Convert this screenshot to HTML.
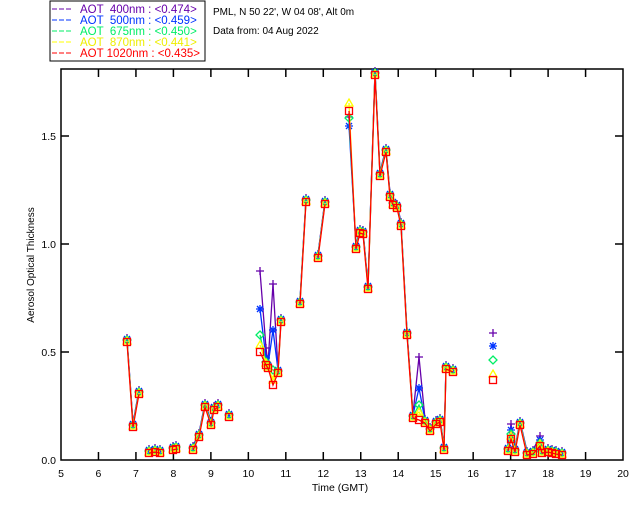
<!DOCTYPE html>
<html><head><meta charset="utf-8"><style>
html,body{margin:0;padding:0;background:#fff;width:640px;height:512px;overflow:hidden}
svg{display:block;font-family:"Liberation Sans",sans-serif}
text{white-space:pre}
</style></head><body>
<svg id="s" width="640" height="512" xmlns="http://www.w3.org/2000/svg">
<rect x="50" y="1" width="155" height="60" fill="#fff" stroke="#000" stroke-width="1"/>
<g font-size="11.5">
<line x1="52" y1="9" x2="72" y2="9" stroke="#6600aa" stroke-dasharray="5,2"/><text x="80" y="13" fill="#6600aa" xml:space="preserve">AOT  400nm : &lt;0.474&gt;</text>
<line x1="52" y1="20" x2="72" y2="20" stroke="#0033ff" stroke-dasharray="5,2"/><text x="80" y="24" fill="#0033ff" xml:space="preserve">AOT  500nm : &lt;0.459&gt;</text>
<line x1="52" y1="31" x2="72" y2="31" stroke="#00ee66" stroke-dasharray="5,2"/><text x="80" y="35" fill="#00ee66" xml:space="preserve">AOT  675nm : &lt;0.450&gt;</text>
<line x1="52" y1="42" x2="72" y2="42" stroke="#ffff00" stroke-dasharray="5,2"/><text x="80" y="46" fill="#eeee00" xml:space="preserve">AOT  870nm : &lt;0.441&gt;</text>
<line x1="52" y1="53" x2="72" y2="53" stroke="#ff0000" stroke-dasharray="5,2"/><text x="80" y="57" fill="#ff0000" xml:space="preserve">AOT 1020nm : &lt;0.435&gt;</text>
</g>
<text x="213" y="15" fill="#000" font-size="10">PML, N 50 22', W 04 08', Alt 0m</text>
<text x="213" y="34" fill="#000" font-size="10">Data from: 04 Aug 2022</text>
<g id="ax" stroke="#000" stroke-width="1.5" fill="none"><rect x="61" y="69" width="562" height="391"/></g>
<g id="lbl" font-size="10.5" fill="#000"></g>
<text x="340" y="491" font-size="10.5" text-anchor="middle">Time (GMT)</text>
<text transform="translate(34,265) rotate(-90)" font-size="10" text-anchor="middle">Aerosol Optical Thickness</text>
<g id="data"></g>
</svg>
<script>
var NS="http://www.w3.org/2000/svg";
function el(p,t,a){var e=document.createElementNS(NS,t);for(var k in a)e.setAttribute(k,a[k]);p.appendChild(e);return e;}
var ax=document.getElementById('ax'),lb=document.getElementById('lbl');
for(var h=5;h<=20;h++){var x=61+(h-5)*37.47;
 if(h>5&&h<20){el(ax,'line',{x1:x,y1:460,x2:x,y2:452});el(ax,'line',{x1:x,y1:69,x2:x,y2:77});}
 var t=el(lb,'text',{x:x,y:477,'text-anchor':'middle'});t.textContent=h;}
[0,0.5,1,1.5].forEach(function(v){var y=460-216*v;
 if(v>0){el(ax,'line',{x1:61,y1:y,x2:69,y2:y});el(ax,'line',{x1:623,y1:y,x2:615,y2:y});}
 var t=el(lb,'text',{x:56,y:y+4,'text-anchor':'end'});t.textContent=v.toFixed(1);});
var segs=[
[[127,342],[133,427],[139,394]],
[[149,453],[155,452],[160,453]],
[[173,450],[176,449]],
[[193,450],[199,437],[205,407],[211,425],[214,410],[218,407]],
[[229,417]],
[[260,352],[266,365],[268,368],[273,385],[278,373],[281,322]],
[[300,304],[306,202]],
[[318,258],[325,204]],
[[349,111],[356,249],[360,233],[363,234],[368,289],[375,75],[380,176],[386,152],[390,197],[393,205],[397,208],[401,226],[407,335],[413,418],[419,420],[425,423],[430,431],[436,424],[440,422],[444,450],[446,369],[453,372]],
[[493,380]],
[[508,451],[511,439],[515,452],[520,425],[527,455],[533,454],[540,446],[542,453],[548,452],[552,453],[556,454],[562,455]]];
var ser=[{c:'#6600aa',o:4,m:'plus'},{c:'#0033ff',o:3,m:'star'},{c:'#00ee66',o:2,m:'dia'},{c:'#ffff00',o:1,m:'tri'},{c:'#ff0000',o:0,m:'sq'}];
var ov={493:[333,346,360,374],260:[271,309,335,345],273:[284,330,370,380],419:[357,388,405,412],266:[348,358,362,363],349:[117,126,118,103],511:[424,430,434,436],540:[436,440,443,444]};
var g=document.getElementById('data');
ser.forEach(function(s,i){segs.forEach(function(sg){
 var pts=sg.map(function(p){return [p[0],(ov[p[0]]&&i<4)?ov[p[0]][i]:p[1]-s.o];});
 if(pts.length>1)el(g,'polyline',{points:pts.map(function(p){return p.join(',')}).join(' '),fill:'none',stroke:s.c,'stroke-width':1.3});
 pts.forEach(function(p){var x=p[0],y=p[1],a={fill:'none',stroke:s.c,'stroke-width':1.3};
  if(s.m=='plus'){el(g,'path',Object.assign({d:'M'+(x-4)+' '+y+'h8M'+x+' '+(y-4)+'v8'},a));}
  else if(s.m=='star'){el(g,'path',Object.assign({d:'M'+(x-4)+' '+y+'h8M'+x+' '+(y-4)+'v8M'+(x-3)+' '+(y-3)+'l6 6M'+(x+3)+' '+(y-3)+'l-6 6'},a));}
  else if(s.m=='dia'){el(g,'path',Object.assign({d:'M'+x+' '+(y-4)+'l4 4l-4 4l-4 -4z'},a));}
  else if(s.m=='tri'){el(g,'path',Object.assign({d:'M'+x+' '+(y-4)+'l4 7h-8z'},a));}
  else {el(g,'rect',Object.assign({x:x-3.5,y:y-3.5,width:7,height:7},a));}
 });});});
</script>
</body></html>
